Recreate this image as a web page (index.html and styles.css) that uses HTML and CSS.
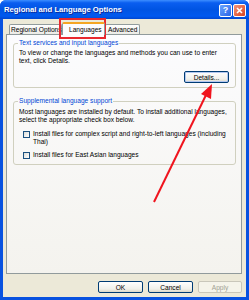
FILE: index.html
```html
<!DOCTYPE html>
<html lang="en">
<head>
    <meta charset="UTF-8">
    <meta name="viewport" content="width=device-width, initial-scale=1.0">
    <title>Regional and Language Options</title>
    <link rel="stylesheet" href="styles.css">
</head>
<body>
    <div class="window">
        <div class="titlebar">
            <span class="title">Regional and Language Options</span>
            <div class="caption-buttons">
                <span class="cap-btn help">?</span>
                <span class="cap-btn close">
                    <svg width="7" height="7" viewBox="0 0 7 7"><path d="M1 1L6 6M6 1L1 6" stroke="#fff" stroke-width="1.6"/></svg>
                </span>
            </div>
        </div>
        <div class="client">
            <div class="tabs">
                <span class="tab tab-regional">Regional Options</span>
                <span class="tab tab-languages selected">Languages</span>
                <span class="tab tab-advanced">Advanced</span>
            </div>
            <div class="page">
                <fieldset class="group group-services">
                    <legend>Text services and input languages</legend>
                    <p>To view or change the languages and methods you can use to enter<br>text, click Details.</p>
                    <div class="group-actions">
                        <button class="btn default">Details...</button>
                    </div>
                </fieldset>
                <fieldset class="group group-supplemental">
                    <legend>Supplemental language support</legend>
                    <p>Most languages are installed by default. To install additional languages,<br>select the appropriate check box below.</p>
                    <label class="check">
                        <span class="box"></span>
                        <span>Install files for complex script and right-to-left languages (including<br>Thai)</span>
                    </label>
                    <label class="check">
                        <span class="box"></span>
                        <span>Install files for East Asian languages</span>
                    </label>
                </fieldset>
            </div>
            <div class="buttons">
                <button class="btn">OK</button>
                <button class="btn">Cancel</button>
                <button class="btn" disabled>Apply</button>
            </div>
        </div>
    </div>

    <!-- annotation drawn over the dialog -->
    <div class="highlight"></div>
    <svg class="arrow" width="249" height="300" viewBox="0 0 249 300">
        <line x1="154" y1="202" x2="206" y2="95" stroke="#f0141e" stroke-width="2"/>
        <polygon points="212,84 201,94 211,99" fill="#f0141e"/>
    </svg>
</body>
</html>
```

FILE: styles.css
```css
* {
    box-sizing: border-box;
}
body {
    margin: 0;
    width: 249px;
    height: 300px;
    font-family: "Liberation Sans", Arial, sans-serif;
    font-size: 6.6px;
    line-height: 8px;
    color: #000;
    position: relative;
    overflow: hidden;
    background: #fff;
}
.window {
    display: flex;
    flex-direction: column;
    height: 300px;
    background: #0852e0;
    padding: 0 3px 3px 3px;
    border-radius: 6px 6px 0 0;
}
.titlebar {
    height: 19px;
    margin: 0 -3px;
    padding: 0 3px 0 4px;
    display: flex;
    align-items: center;
    justify-content: space-between;
    background: linear-gradient(#3d8eff 0%, #0a5ef0 15%, #0054e3 50%, #0059ef 85%, #0046d0 100%);
    border-radius: 6px 6px 0 0;
}
.title {
    color: #fff;
    font-weight: bold;
    font-size: 7.7px;
    text-shadow: 1px 1px 0 #0a2a9c;
}
.caption-buttons {
    display: flex;
    gap: 1px;
    margin-top: 1px;
}
.cap-btn {
    width: 13px;
    height: 13px;
    border: 1px solid #fff;
    border-radius: 2px;
    color: #fff;
    font-weight: bold;
    font-size: 9px;
    display: flex;
    align-items: center;
    justify-content: center;
}
.help {
    background: linear-gradient(135deg, #6aa6ff, #2a63e6);
}
.close {
    background: linear-gradient(135deg, #f3937a, #d8431f);
}
.client {
    flex: 1;
    background: #ece9d8;
    display: flex;
    flex-direction: column;
    padding: 3px 4px 4px 3px;
}
.tabs {
    display: flex;
    align-items: flex-end;
    height: 12px;
    padding-left: 3px;
}
.tab {
    height: 10px;
    padding-left: 1px;
    line-height: 9px;
    white-space: nowrap;
    border: 1px solid #919b9c;
    border-bottom: none;
    border-radius: 2px 2px 0 0;
    background: linear-gradient(#fefefe, #ecebe6);
}
.tab-regional {
    width: 53px;
}
.tab-languages {
    width: 43px;
    padding-left: 6px;
}
.tab-advanced {
    width: 35px;
    padding-left: 2px;
}
.tab.selected {
    height: 13px;
    margin-bottom: -1px;
    line-height: 12px;
    position: relative;
    z-index: 1;
    background: #fcfcfe;
    border-top: 2px solid #f5a623;
}
.page {
    flex: 1;
    border: 1px solid #919b9c;
    background: linear-gradient(#fcfcfe, #f4f3ee);
    padding: 4px 5px 0 6px;
    display: flex;
    flex-direction: column;
    gap: 9px;
}
.group {
    margin: 0;
    padding: 2px 6px 4px 5px;
    border: 1px solid #d0d0bf;
    border-radius: 3px;
}
.group-supplemental {
    padding-top: 3px;
    padding-bottom: 5px;
}
.group legend {
    padding: 0 1px;
    margin-left: -1px;
    color: #0046d5;
}
.group p {
    margin: 0;
    white-space: nowrap;
}
.group-actions {
    display: flex;
    justify-content: flex-end;
    margin-top: 6px;
}
.btn {
    width: 45px;
    height: 12px;
    padding: 0;
    font-family: inherit;
    font-size: 6.6px;
    color: #000;
    border: 1px solid #003c74;
    border-radius: 2px;
    background: linear-gradient(#ffffff, #f0f0ea 70%, #dcd8c8);
}
.btn.default {
    box-shadow: inset 0 0 0 1px #b4c8f0;
}
.btn:disabled {
    color: #a1a192;
    border-color: #c9c7ba;
    background: #f5f4ea;
}
.check {
    display: flex;
    align-items: flex-start;
    gap: 3px;
    margin: 6px 0 0 4px;
}
.check + .check {
    margin-top: 5px;
}
.box {
    width: 7px;
    height: 7px;
    margin-top: 1px;
    flex: none;
    border: 1px solid #1c5180;
    background: linear-gradient(135deg, #dcdcd7, #fff);
}
.buttons {
    display: flex;
    justify-content: flex-end;
    gap: 5px;
    margin-top: 7px;
}
.buttons .btn:last-child {
    width: 44px;
}
.highlight {
    position: absolute;
    left: 59px;
    top: 18px;
    width: 47px;
    height: 21px;
    border: 2px solid #e8282f;
}
.arrow {
    position: absolute;
    left: 0;
    top: 0;
    pointer-events: none;
}
```
